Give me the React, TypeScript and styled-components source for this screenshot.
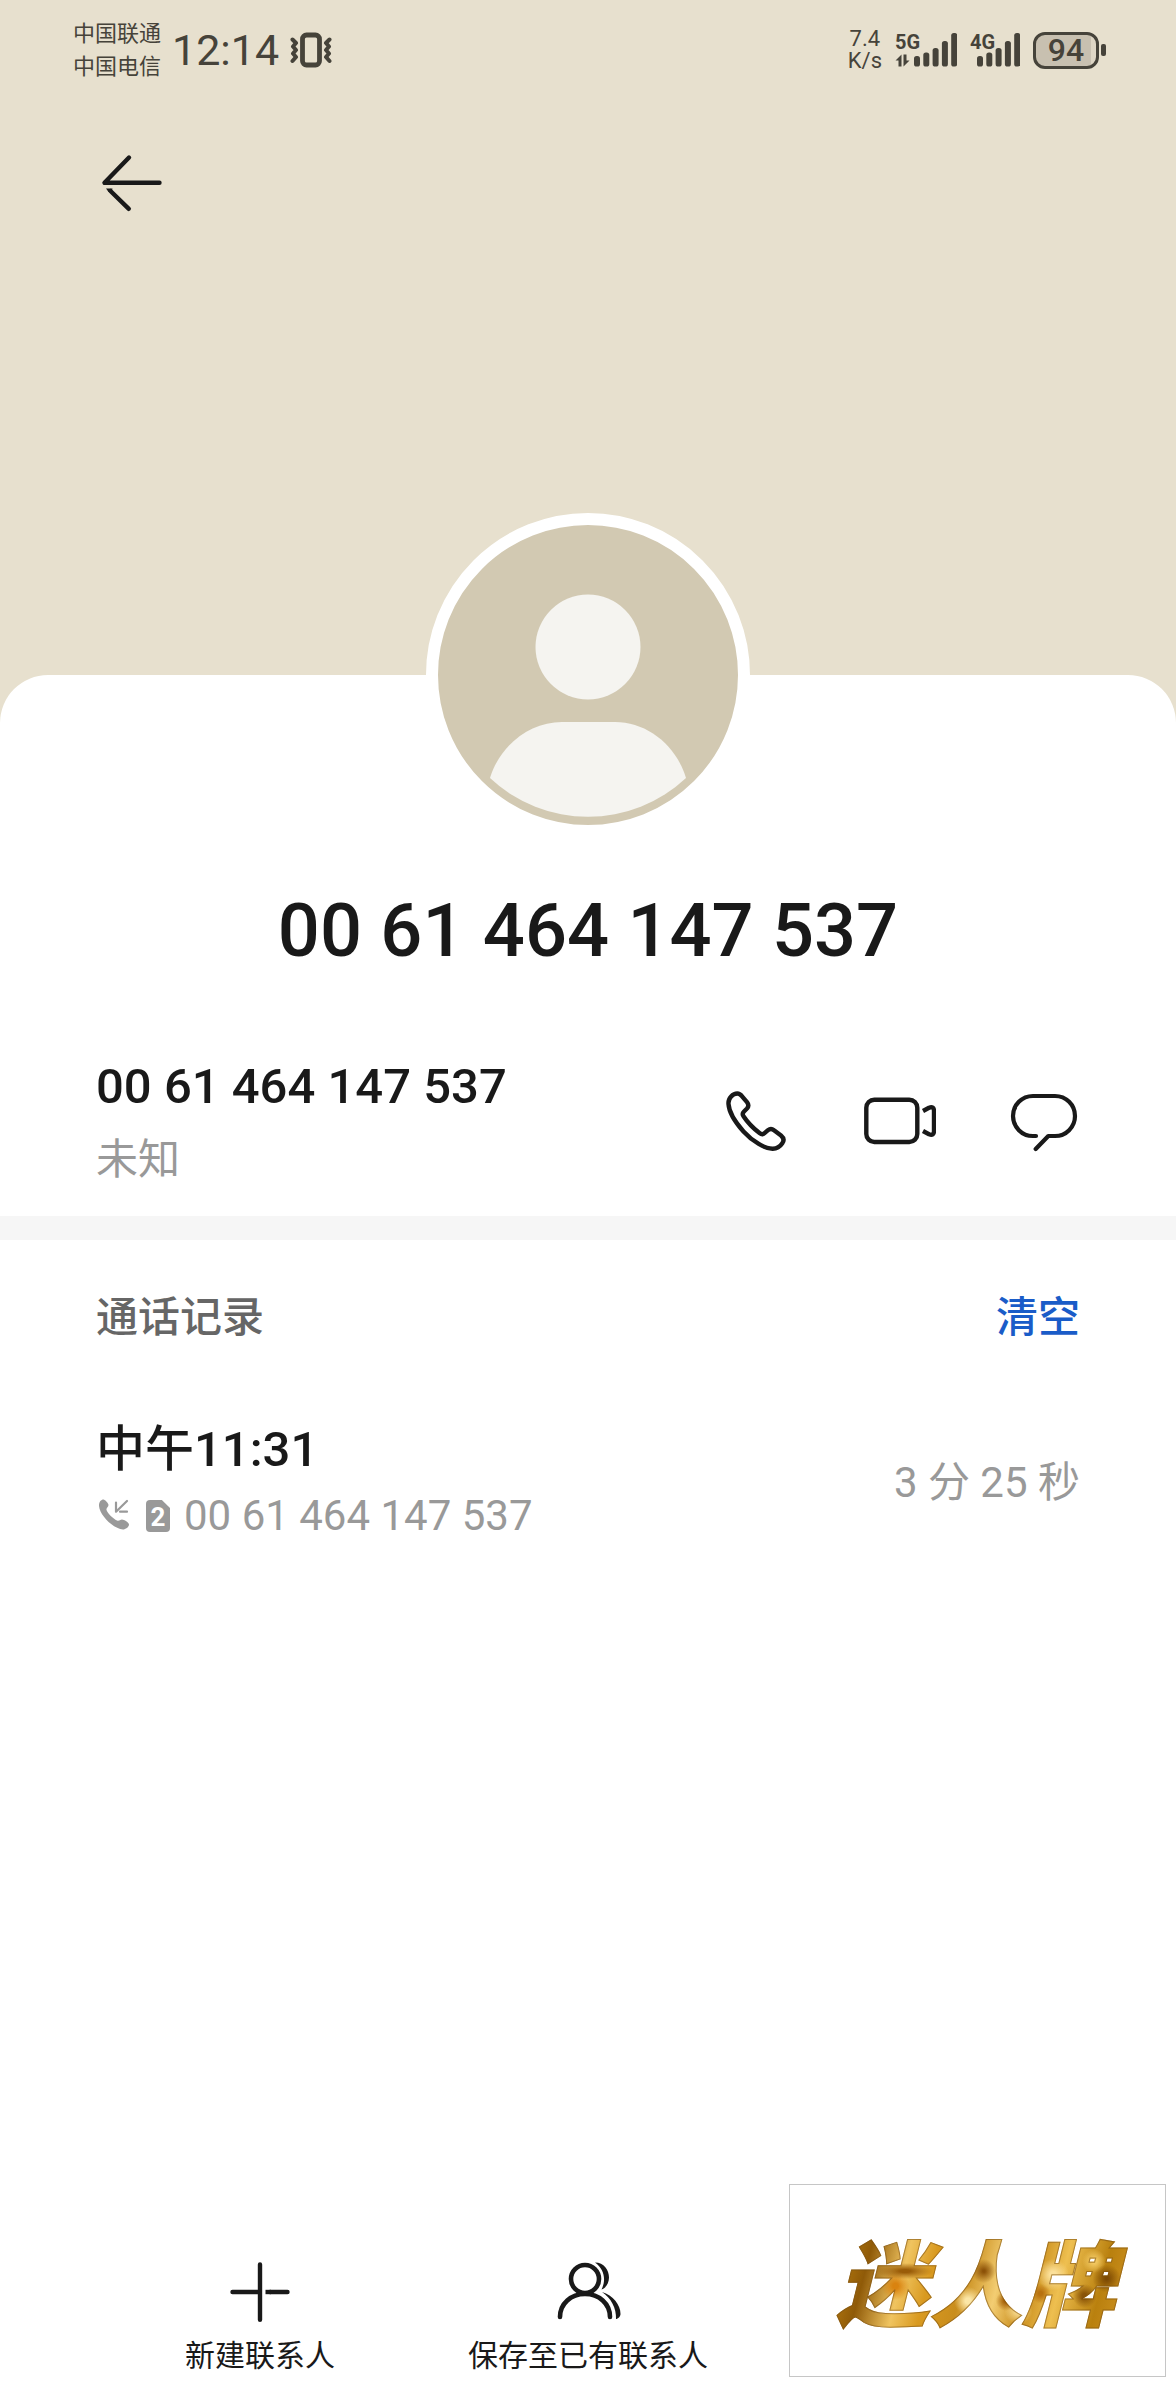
import React from "react";
import styled, { createGlobalStyle } from "styled-components";

const ink = "#191919";
const muted = "#999999";
const statusInk = "#46433a";
const cream = "#e7e0ce";

const GlobalStyle = createGlobalStyle`
  * { box-sizing: border-box; }
  body {
    margin: 0;
    background: ${cream};
    color: ${ink};
    font-family: Roboto, "Noto Sans CJK SC", sans-serif;
  }
  button {
    display: flex;
    padding: 0;
    border: 0;
    background: none;
    color: inherit;
    font: inherit;
    cursor: pointer;
  }
  svg { display: block; flex: none; }
  h1, h2, p { margin: 0; font-weight: inherit; font-size: inherit; }
`;

const Page = styled.main`
  position: relative;
  display: flex;
  flex-direction: column;
  min-height: 100vh;
`;

const Hero = styled.header`
  padding-bottom: 456px;
`;

const StatusBar = styled.div`
  display: flex;
  align-items: center;
  justify-content: space-between;
  height: 100px;
  padding: 0 70px 0 73px;
  color: ${statusInk};
`;

const StatusGroup = styled.div<{ $gap: number }>`
  display: flex;
  align-items: center;
  gap: ${(p) => p.$gap}px;
`;

const Carriers = styled.div`
  font-size: 22px;
  line-height: 33px;
`;

const Clock = styled.time`
  font-size: 43px;
  line-height: 50px;
`;

const Speed = styled.div`
  display: flex;
  flex-direction: column;
  font-size: 22px;
  line-height: 22px;
  text-align: center;
`;

const Signal = styled.div`
  display: grid;
  > * { grid-area: 1 / 1; }
`;

const SignalLabel = styled.span`
  font-size: 20px;
  font-weight: 700;
  line-height: 20px;
`;

const Battery = styled.div`
  display: flex;
  align-items: center;
  gap: 2px;
`;

const BatteryShell = styled.div`
  width: 66px;
  border: 3px solid ${statusInk};
  border-radius: 12px;
  background: linear-gradient(to right, #c8c0b0 92%, #ded6c5 92%);
  font-size: 32px;
  font-weight: 500;
  line-height: 31px;
  text-align: center;
`;

const BatteryTip = styled.div`
  width: 5px;
  height: 12px;
  border-radius: 2px;
  background: ${statusInk};
`;

const Toolbar = styled.nav`
  display: flex;
  padding: 47px 96px 0;
`;

const Sheet = styled.section`
  display: flex;
  flex: 1;
  flex-direction: column;
  border-radius: 48px 48px 0 0;
  background: #ffffff;
`;

const Avatar = styled.div`
  align-self: center;
  margin-top: -162px;
  border: 12px solid #ffffff;
  border-radius: 50%;
  background: #d2c9b2;
`;

const Title = styled.h1`
  && {
    margin-top: 49px;
    font-size: 74px;
    font-weight: 500;
  }
  line-height: 90px;
  text-align: center;
`;

const Row = styled.div<{ $top: number; $bottom: number }>`
  display: flex;
  align-items: center;
  justify-content: space-between;
  padding: ${(p) => p.$top}px 96px ${(p) => p.$bottom}px;
`;

const Stack = styled.div<{ $gap: number }>`
  display: flex;
  flex-direction: column;
  gap: ${(p) => p.$gap}px;
`;

const Primary = styled.p`
  && {
    font-size: 49px;
    font-weight: 500;
  }
  line-height: 60px;
`;

const Secondary = styled.p`
  && { font-size: 42px; }
  display: flex;
  align-items: center;
  gap: 14px;
  color: ${muted};
  line-height: 60px;
`;

const Actions = styled.div`
  display: flex;
  gap: 72px;
`;

const Divider = styled.hr`
  width: 100%;
  height: 24px;
  margin: 0;
  border: 0;
  background: #f6f6f6;
`;

const SectionTitle = styled.h2`
  && {
    font-size: 42px;
    font-weight: 500;
  }
  color: #666666;
  line-height: 60px;
`;

const ClearButton = styled.button`
  && {
    color: #1a5cc8;
    font-size: 42px;
    font-weight: 500;
    line-height: 60px;
  }
`;

const SimBadge = styled.span`
  width: 24px;
  height: 32px;
  border-radius: 4px;
  background: ${muted};
  clip-path: polygon(0 0, 66% 0, 100% 25%, 100% 100%, 0 100%);
  color: #ffffff;
  font-size: 26px;
  font-weight: 700;
  line-height: 34px;
  text-align: center;
`;

const BottomBar = styled.footer`
  display: grid;
  grid-template-columns: repeat(3, 1fr);
  margin-top: auto;
  padding: 0 96px 23px;
`;

const BottomButton = styled.button`
  && {
    flex-direction: column;
    align-items: center;
    gap: 7px;
    font-size: 30px;
    line-height: 42px;
    white-space: nowrap;
  }
`;

const Watermark = styled.aside`
  position: absolute;
  right: 10px;
  bottom: 23px;
  display: flex;
  align-items: center;
  justify-content: center;
  width: 377px;
  height: 193px;
  border: 1px solid #c6c6c6;
  background: #ffffff;
`;

const WatermarkText = styled.span`
  padding: 0 20px 4px 16px;
  background:
    radial-gradient(ellipse 28px 8px at 27% 42%, #9a5c08 20%, transparent),
    radial-gradient(circle 14px at 24% 54%, #d98310 20%, transparent),
    radial-gradient(circle 12px at 52% 42%, #8c5208 10%, transparent),
    radial-gradient(circle 14px at 47% 66%, #fbe6a6 20%, transparent),
    radial-gradient(circle 10px at 59% 66%, #a8640c 20%, transparent),
    radial-gradient(circle 14px at 63% 74%, #f7d98c 20%, transparent),
    radial-gradient(circle 16px at 74% 45%, #fbe09a 20%, transparent),
    radial-gradient(circle 10px at 70% 60%, #b87210 20%, transparent),
    radial-gradient(circle 14px at 91% 48%, #7d4a04 10%, transparent),
    radial-gradient(circle 12px at 84% 62%, #8a5408 20%, transparent),
    radial-gradient(circle 12px at 87% 34%, #f2c860 20%, transparent),
    linear-gradient(105deg, #b97d10 8%, #8f5a08 17%, #f0c460 28%, #d99a20 36%, #c98d1c 46%, #f3cd72 56%, #c98d1c 65%, #eebf50 74%, #b9800e 86%, #c98d1c 93%);
  background-clip: text;
  color: transparent;
  font-family: "Noto Sans CJK SC", sans-serif;
  font-size: 93px;
  font-style: italic;
  font-weight: 900;
  line-height: 120px;
  -webkit-text-stroke: 1px rgba(122, 78, 16, 0.55);
`;

const stroke = {
  fill: "none",
  stroke: "currentColor",
  strokeLinecap: "round" as const,
  strokeLinejoin: "round" as const,
};

const VibrateIcon = () => (
  <svg width="42" height="36" viewBox="0 0 42 36" {...stroke} strokeWidth="4">
    <rect x="12.500" y="3" width="17" height="30" rx="4" strokeWidth="4.800" />
    <path d="M2.500 7.500l3.500 3.500-3 3.500 3 3.500-3 3.500 3 3.500-3.500 4" />
    <path d="M39.500 7.500l-3.500 3.500 3 3.500-3 3.500 3 3.500-3 3.500 3.500 4" />
  </svg>
);

const barTops = [24, 20.5, 16, 9, 1];

const SignalBars = ({ start, width, data }: { start: number; width: number; data?: boolean }) => (
  <svg width={width} height="36" viewBox={`0 0 ${width} 36`} fill="currentColor">
    {barTops.map((top, i) => (
      <rect key={top} x={start + i * 9.3} y={top} width="6" height={34.5 - top} rx="2.600" />
    ))}
    {data && <path d="M3.500 34.500V28.500H0.500L6.500 22.500V34.500ZM8.500 22.500V34.500L14.500 28.500H11.500V22.500Z" />}
  </svg>
);

const BackIcon = () => (
  <svg width="72" height="72" viewBox="0 0 72 72" {...stroke} strokeWidth="4.400">
    <path d="M33 10.500L8.500 35.800H63.500" />
    <path d="M14.500 44L32.800 61.800" />
    <path d="M10 41.500h6.500l-1 3.500h-3z" fill="currentColor" stroke="none" />
  </svg>
);

const PersonPicture = () => (
  <svg width="300" height="300" viewBox="0 0 300 300" fill="#f5f4f0">
    <circle cx="150" cy="122" r="52.500" />
    <path d="M52 253C62 220 92 197 124 197H177C209 197 238 220 248 253A143 143 0 0 1 52 253Z" />
  </svg>
);

const PhoneIcon = () => (
  <svg width="72" height="72" viewBox="0 0 72 72" {...stroke} strokeWidth="4.400">
    <path d="M8.500 16C8 10 13 5.500 17.300 5.500C20 5.500 21 7 22.500 8.800L27 14.200C28.800 16.500 28.800 18.500 27 20.500L24 23.500C22.300 25.200 22.300 26.500 23.500 28.200C28 35 33 40 39.500 45C41.500 46.600 43 46.600 44.500 45.200L48 42.200C50 40.500 52 40.600 54 42.200L61 47.500C64 50 64.300 52.500 62.300 55.300C59.500 59.500 56.500 60.800 52.500 60.700C45 60.500 33 54 23.500 43.500C15.500 34.500 9 24 8.500 16Z" />
  </svg>
);

const VideoIcon = () => (
  <svg width="72" height="72" viewBox="0 0 72 72" {...stroke} strokeWidth="4.400">
    <rect x="2.300" y="11.700" width="51" height="42.300" rx="8" />
    <path d="M59 23L65 19.800Q70 18 70 23V43Q70 48 65 46.200L59 43" strokeLinecap="butt" />
  </svg>
);

const MessageIcon = () => (
  <svg width="72" height="72" viewBox="0 0 72 72" {...stroke} strokeWidth="4.200">
    <path d="M28 48H25A20 20 0 0 1 25 8H47A20 20 0 0 1 47 48H40.300L27.700 61" />
  </svg>
);

const IncomingIcon = () => (
  <svg width="36" height="36" viewBox="0 0 36 36" {...stroke} strokeWidth="2.200">
    <path
      d="M3 8C2.800 4 5 1.500 7.500 1.500C9 1.500 12.500 5.500 12.500 7C12.500 9 10 10 10.500 12C12 16 17 20.500 21 22.500C23 23.500 24 21.500 26 21.500C28 21.500 33 24.500 33 26.500C33 29 29.500 31.500 27 31.500C18 31 4 18 3 8Z"
      fill="currentColor"
      stroke="none"
    />
    <path d="M31 3L20 13.700V4.500M24 13.700h7" />
  </svg>
);

const PlusIcon = () => (
  <svg width="72" height="72" viewBox="0 0 72 72" {...stroke} strokeWidth="4.400">
    <path d="M36 8.500V63.800M8.500 36H36M46 36H63.500" />
    <path d="M41.500 36H47" strokeLinecap="butt" />
  </svg>
);

const PeopleIcon = () => (
  <svg width="72" height="72" viewBox="0 0 72 72" {...stroke} strokeWidth="4.600">
    <circle cx="33" cy="23" r="14" />
    <path d="M8 61C8 47.500 19 38 33 38S58 47.500 58 61" />
    <g fill="currentColor" stroke="none">
      <path d="M43 6.500C52 6.500 57 14 57 21.500C57 27 54 32 49.500 33.500C54 25 53 13.500 43 6.500Z" />
      <path d="M50 36C61 39 68.500 49 68.500 58C68.500 60.500 66 63 64 63C64.500 52 59 42 50 36Z" />
    </g>
  </svg>
);

export default function App() {
  return (
    <>
      <GlobalStyle />
      <Page>
        <Hero>
          <StatusBar>
            <StatusGroup $gap={11}>
              <Carriers>
                <div>中国联通</div>
                <div>中国电信</div>
              </Carriers>
              <Clock>12:14</Clock>
              <VibrateIcon />
            </StatusGroup>
            <StatusGroup $gap={13}>
              <Speed>
                <span>7.4</span>
                <span>K/s</span>
              </Speed>
              <Signal>
                <SignalLabel>5G</SignalLabel>
                <SignalBars start={19} width={62} data />
              </Signal>
              <Signal>
                <SignalLabel>4G</SignalLabel>
                <SignalBars start={7} width={50} />
              </Signal>
              <Battery>
                <BatteryShell>94</BatteryShell>
                <BatteryTip />
              </Battery>
            </StatusGroup>
          </StatusBar>
          <Toolbar>
            <button aria-label="返回">
              <BackIcon />
            </button>
          </Toolbar>
        </Hero>

        <Sheet>
          <Avatar>
            <PersonPicture />
          </Avatar>
          <Title>00 61 464 147 537</Title>

          <Row $top={81} $bottom={26}>
            <Stack $gap={13}>
              <Primary>00 61 464 147 537</Primary>
              <Secondary>未知</Secondary>
            </Stack>
            <Actions>
              <button aria-label="拨打电话">
                <PhoneIcon />
              </button>
              <button aria-label="视频通话">
                <VideoIcon />
              </button>
              <button aria-label="发送信息">
                <MessageIcon />
              </button>
            </Actions>
          </Row>

          <Divider />

          <Row $top={48} $bottom={36}>
            <SectionTitle>通话记录</SectionTitle>
            <ClearButton>清空</ClearButton>
          </Row>

          <Row $top={36} $bottom={36}>
            <Stack $gap={6}>
              <Primary>中午11:31</Primary>
              <Secondary>
                <IncomingIcon />
                <SimBadge>2</SimBadge>
                <span>00 61 464 147 537</span>
              </Secondary>
            </Stack>
            <Secondary>3 分 25 秒</Secondary>
          </Row>

          <BottomBar>
            <BottomButton>
              <PlusIcon />
              新建联系人
            </BottomButton>
            <BottomButton>
              <PeopleIcon />
              保存至已有联系人
            </BottomButton>
          </BottomBar>
        </Sheet>

        <Watermark>
          <WatermarkText>迷人牌</WatermarkText>
        </Watermark>
      </Page>
    </>
  );
}
